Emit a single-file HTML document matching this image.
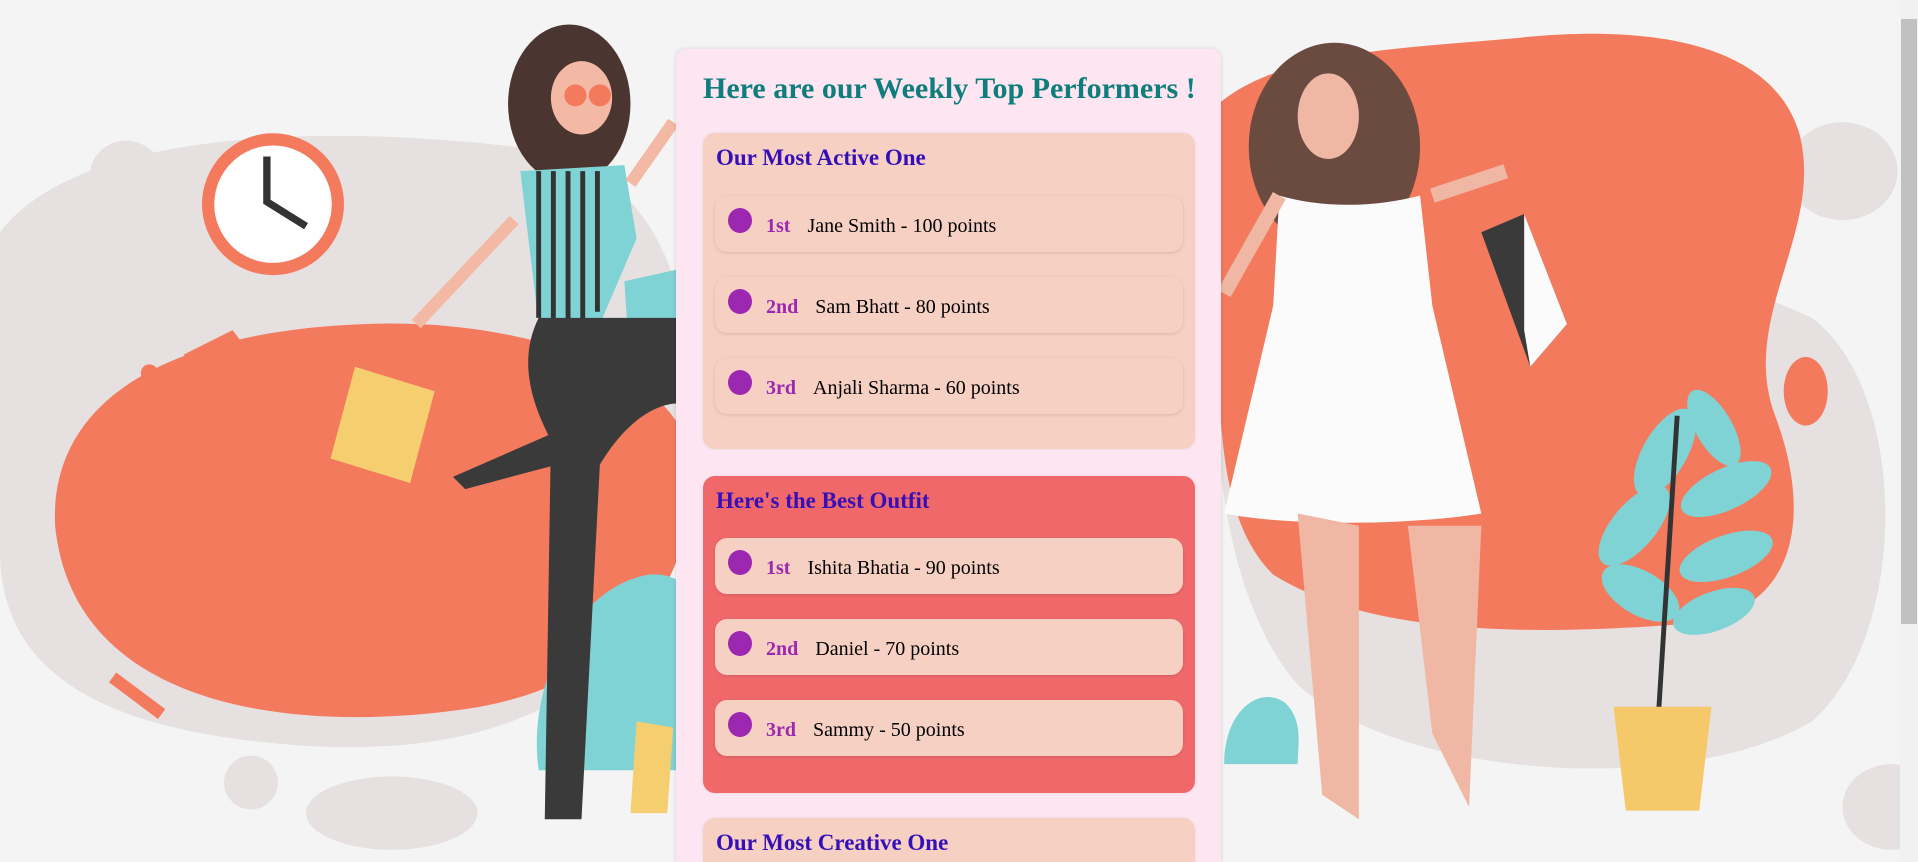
<!DOCTYPE html>
<html><head><meta charset="utf-8"><style>
*{margin:0;padding:0;box-sizing:border-box}
html,body{width:1918px;height:862px;overflow:hidden;background:#f4f4f4;font-family:"Liberation Serif",serif;position:relative}
#bg{position:absolute;left:0;top:0}
.sb{position:absolute;left:1900px;top:0;width:18px;height:862px;background:#f1f1f1}
.thumb{position:absolute;left:1901px;top:19px;width:16px;height:605px;background:#c1c1c1}
.card{position:absolute;left:676px;top:49px;width:545px;height:813px;background:#fde6f2;border-radius:10px 10px 0 0;box-shadow:0 0 4px rgba(0,0,0,.15)}
.title{position:absolute;left:703px;top:72px;font-size:30px;font-weight:bold;color:#0f7d7c;white-space:nowrap}
.panel{position:absolute;left:703px;width:492px;border-radius:12px;box-shadow:0 0 3px rgba(0,0,0,.08);overflow:hidden}
.h{position:absolute;left:13px;font-size:23px;font-weight:bold;color:#3510b8;white-space:nowrap}
.item{position:absolute;left:12px;width:468px;height:56px;border-radius:12px;background:#f6d0c3;box-shadow:0 1px 3px rgba(0,0,0,.12)}
.dot{position:absolute;left:13px;top:12px;width:24px;height:25px;border-radius:50%;background:#9c27b0}
.t{position:absolute;left:51px;top:19px;font-size:20px;white-space:nowrap;color:#000}
.t b{color:#9c27b0;margin-right:17px}
</style></head><body>
<svg id="bg" width="1900" height="862" viewBox="0 0 1552 705" preserveAspectRatio="none">
<rect width="1552" height="705" fill="#f4f4f4"/>
<g fill="#e6e0e0">
<path d="M0 190 C60 110 250 100 420 120 C540 130 580 250 560 400 C540 560 420 620 250 610 C100 600 0 560 0 450Z"/>
<path d="M1010 200 C1150 170 1350 200 1480 260 C1560 320 1560 520 1480 590 C1380 650 1150 640 1060 560 C990 480 980 300 1010 200Z"/>
<circle cx="103" cy="145" r="30"/><ellipse cx="1505" cy="140" rx="45" ry="40"/>
<ellipse cx="1545" cy="660" rx="40" ry="35"/><circle cx="205" cy="640" r="22"/><ellipse cx="320" cy="665" rx="70" ry="30"/>
<ellipse cx="25" cy="225" rx="25" ry="40"/>
</g>
<g fill="#f47a5e">
<path d="M45 430 C40 320 150 270 300 265 C420 260 540 300 560 360 C580 460 520 560 380 580 C240 600 60 580 45 430Z"/>
<path d="M990 90 C1040 40 1150 40 1250 30 C1360 20 1450 40 1470 110 C1490 190 1420 260 1450 340 C1480 420 1470 500 1380 510 C1250 520 1120 520 1040 470 C990 420 1000 330 990 250Z"/>
<path d="M150 290 l40-20 6 8 -40 20Z"/><circle cx="122" cy="305" r="7"/>
<path d="M95 550 l40 30 -6 8 -40-30Z"/>
<ellipse cx="1475" cy="320" rx="18" ry="28"/><ellipse cx="1415" cy="110" rx="14" ry="35"/><ellipse cx="1437" cy="183" rx="8" ry="14"/>
</g>
<circle cx="223" cy="167" r="53" fill="#fff" stroke="#f47a5e" stroke-width="10"/>
<path d="M218 128 V165 L250 185" stroke="#333" stroke-width="6" fill="none"/>
<g fill="#7fd3d5">
<path d="M440 630 C430 560 470 480 530 470 C580 465 600 540 580 630Z"/>
<path d="M1000 625 C1000 580 1030 560 1050 575 C1065 590 1060 610 1060 625Z"/>
<path d="M510 230 l45-10 5 80 -45 5Z"/>
<ellipse cx="1360" cy="370" rx="18" ry="40" transform="rotate(30 1360 370)"/>
<ellipse cx="1400" cy="350" rx="15" ry="35" transform="rotate(-30 1400 350)"/>
<ellipse cx="1335" cy="430" rx="18" ry="40" transform="rotate(40 1335 430)"/>
<ellipse cx="1410" cy="455" rx="40" ry="17" transform="rotate(-20 1410 455)"/>
<ellipse cx="1410" cy="400" rx="40" ry="17" transform="rotate(-25 1410 400)"/>
<ellipse cx="1340" cy="485" rx="35" ry="18" transform="rotate(30 1340 485)"/>
<ellipse cx="1400" cy="500" rx="35" ry="16" transform="rotate(-20 1400 500)"/>
</g>
<path d="M1370 340 L1355 580" stroke="#333" stroke-width="4"/>
<path d="M1318 578 h80 l-10 85 h-60Z" fill="#f5c96a"/>
<path d="M290 300 l65 20 -20 75 -65-20Z" fill="#f5cf6f"/>
<path d="M520 590 l30 5 -5 70 -30 0Z" fill="#f5cf6f"/>
<ellipse cx="465" cy="85" rx="50" ry="65" fill="#4a3530"/>
<ellipse cx="475" cy="80" rx="25" ry="30" fill="#f3b9a4"/>
<circle cx="470" cy="78" r="9" fill="#f47a5e"/><circle cx="490" cy="78" r="9" fill="#f47a5e"/>
<path d="M425 140 l85-5 10 60 -30 70 -50 0Z" fill="#7fd3d5"/>
<path d="M440 140 v120 M452 140 v125 M464 140 v125 M476 140 v125 M488 140 v115" stroke="#333" stroke-width="4"/>
<path d="M440 260 C420 300 440 340 450 360 L445 670 L475 670 L490 380 C520 330 550 330 553 330 V260Z" fill="#3a3a3a"/>
<path d="M370 390 l80-35 5 25 -75 20Z" fill="#3a3a3a"/>
<path d="M420 180 L340 265" stroke="#f3b9a4" stroke-width="10"/>
<path d="M515 150 L550 100" stroke="#f3b9a4" stroke-width="10"/>
<ellipse cx="1090" cy="120" rx="70" ry="85" fill="#6b4a40"/>
<ellipse cx="1085" cy="95" rx="25" ry="35" fill="#f0b7a4"/>
<path d="M1045 160 C1080 170 1120 170 1160 160 L1170 250 L1210 420 C1150 430 1050 430 1000 420 L1040 250Z" fill="#fbfbfb"/>
<path d="M1060 420 L1080 650 L1110 670 L1110 430Z M1150 430 L1170 600 L1200 660 L1210 430Z" fill="#f0b7a4"/>
<path d="M1045 160 L1000 240 M1170 160 L1230 140" stroke="#f0b7a4" stroke-width="12"/>
<path d="M1210 190 l35-15 35 90 -30 35Z" fill="#3a3a3a"/><path d="M1245 175 l35 90 -30 35 -5-30Z" fill="#fbfbfb"/>
</svg>
<div class="sb"></div><div class="thumb"></div>
<div class="card"></div>
<div class="title">Here are our Weekly Top Performers !</div>

<div class="panel" style="top:133px;height:316px;background:#f6d0c3">
 <div class="h" style="top:12px">Our Most Active One</div>
 <div class="item" style="top:63px"><div class="dot"></div><div class="t"><b>1st</b>Jane Smith - 100 points</div></div>
 <div class="item" style="top:144px"><div class="dot"></div><div class="t"><b>2nd</b>Sam Bhatt - 80 points</div></div>
 <div class="item" style="top:225px"><div class="dot"></div><div class="t"><b>3rd</b>Anjali Sharma - 60 points</div></div>
</div>
<div class="panel" style="top:476px;height:317px;background:#f0686a">
 <div class="h" style="top:12px">Here's the Best Outfit</div>
 <div class="item" style="top:62px"><div class="dot"></div><div class="t"><b>1st</b>Ishita Bhatia - 90 points</div></div>
 <div class="item" style="top:143px"><div class="dot"></div><div class="t"><b>2nd</b>Daniel - 70 points</div></div>
 <div class="item" style="top:224px"><div class="dot"></div><div class="t"><b>3rd</b>Sammy - 50 points</div></div>
</div>
<div class="panel" style="top:818px;height:44px;background:#f6d0c3;border-radius:12px 12px 0 0">
 <div class="h" style="top:12px">Our Most Creative One</div>
</div>
</body></html>
